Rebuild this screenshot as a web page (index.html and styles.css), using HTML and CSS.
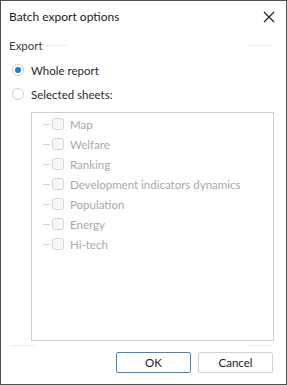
FILE: index.html
```html
<!DOCTYPE html>
<html lang="en">
<head>
    <meta charset="UTF-8">
    <title>Batch export options</title>
    <link rel="stylesheet" href="styles.css">
</head>
<body>
    <div class="window">
        <div class="titlebar">
            <span class="title">Batch export options</span>
            <svg class="close" width="12" height="12" viewBox="0 0 12 12">
                <path d="M1 1 L11 11 M11 1 L1 11" stroke="#222" stroke-width="1.2" fill="none"/>
            </svg>
        </div>

        <div class="content">
            <div class="group-head">
                <span class="group-label">Export</span>
                <span class="rule"></span>
                <span class="spacer"></span>
                <span class="rule"></span>
            </div>

            <div class="radios">
                <div class="radio-row">
                    <span class="radio checked"></span>
                    <span>Whole report</span>
                </div>
                <div class="radio-row">
                    <span class="radio"></span>
                    <span>Selected sheets:</span>
                </div>
            </div>

            <div class="tree">
                <div class="tree-item"><span class="dash"></span><span class="check"></span>Map</div>
                <div class="tree-item"><span class="dash"></span><span class="check"></span>Welfare</div>
                <div class="tree-item"><span class="dash"></span><span class="check"></span>Ranking</div>
                <div class="tree-item"><span class="dash"></span><span class="check"></span>Development indicators dynamics</div>
                <div class="tree-item"><span class="dash"></span><span class="check"></span>Population</div>
                <div class="tree-item"><span class="dash"></span><span class="check"></span>Energy</div>
                <div class="tree-item"><span class="dash"></span><span class="check"></span>Hi-tech</div>
            </div>

            <div class="group-foot">
                <span class="rule"></span>
                <span class="spacer"></span>
                <span class="rule"></span>
            </div>

            <div class="buttons">
                <button class="btn primary">OK</button>
                <button class="btn">Cancel</button>
            </div>
        </div>
    </div>
</body>
</html>
```

FILE: styles.css
```css
* {
    margin: 0;
    padding: 0;
    box-sizing: border-box;
}

body {
    font-family: Lato, 'Open Sans', sans-serif;
    font-size: 11.5px;
    color: #222;
    background-color: #fff;
}

.window {
    width: 287px;
    height: 385px;
    border: 1px solid #4f4f4f;
    background-color: #fff;
    display: flex;
    flex-direction: column;
}

.titlebar {
    height: 31px;
    flex-shrink: 0;
    padding: 0 11px 0 8px;
    display: flex;
    align-items: center;
    justify-content: space-between;
}

.title {
    font-size: 12px;
    color: #1b1b1b;
}

.content {
    padding: 0 13px 0 8px;
    display: flex;
    flex-direction: column;
}

.group-head {
    height: 14px;
    margin-top: 6px;
    flex-shrink: 0;
    display: flex;
    align-items: center;
}

.group-label {
    color: #3c3c3c;
}

.rule {
    width: 24px;
    height: 1px;
    background-color: #ececec;
}

.group-head .rule:first-of-type {
    margin-left: 7px;
}

.spacer {
    flex: 1;
}

.radios {
    margin-top: 6px;
}

.radio-row {
    height: 24px;
    display: flex;
    align-items: center;
    gap: 7px;
    padding-left: 3px;
    color: #2a2a2a;
}

.radio {
    width: 12px;
    height: 12px;
    border: 1px solid #cfcfcf;
    border-radius: 50%;
    display: flex;
    align-items: center;
    justify-content: center;
}

.radio.checked::after {
    content: '';
    width: 6px;
    height: 6px;
    border-radius: 50%;
    background-color: #1f7fd6;
}

.tree {
    height: 229px;
    flex-shrink: 0;
    margin: 6px -1px 0 22px;
    border: 1px solid #cfcfcf;
    padding-top: 1px;
}

.tree-item {
    height: 20px;
    display: flex;
    align-items: center;
    color: #a9a9a9;
}

.dash {
    width: 7px;
    height: 1px;
    margin-left: 11px;
    margin-right: 2px;
    background-color: #d4d4d4;
}

.check {
    width: 12px;
    height: 12px;
    border: 1px solid #d6d6d6;
    border-radius: 3px;
    background-color: #f6f6f6;
    margin-right: 6px;
}

.group-foot {
    display: flex;
    margin-top: 4px;
    padding-left: 1px;
}

.buttons {
    margin-top: 6px;
    display: flex;
    justify-content: flex-end;
    gap: 7px;
}

.btn {
    width: 75px;
    height: 21px;
    font-family: inherit;
    font-size: 11.5px;
    color: #222;
    background-color: #fff;
    border: 1px solid #d3d3d3;
    border-radius: 2px;
}

.btn.primary {
    border-color: #3f88c8;
}
```
